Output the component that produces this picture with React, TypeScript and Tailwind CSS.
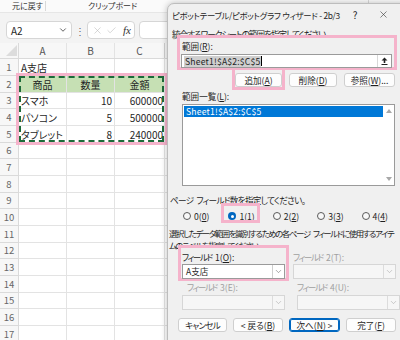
import { ChevronDown, X, Check } from "lucide-react";

const font = "font-['Noto_Sans_CJK_JP',sans-serif] [font-feature-settings:'palt']";

type Row = { a?: string; b?: string; c?: string; head?: boolean };

const data: Row[] = [
  { a: "A支店" },
  { a: "商品", b: "数量", c: "金額", head: true },
  { a: "スマホ", b: "10", c: "600000" },
  { a: "パソコン", b: "5", c: "500000" },
  { a: "タブレット", b: "8", c: "240000" },
];

const rows: Row[] = Array.from({ length: 17 }, (_, i) => data[i] || {});

function Btn({ label, w, primary }: { label: React.ReactNode; w: string; primary?: boolean }) {
  return (
    <div
      className={`${w} h-[14px] flex items-center justify-center rounded-[3px] bg-[#fdfdfd] ${
        primary ? "border border-[#0067c0] shadow-[inset_0_0_0_1px_#0067c0]" : "border border-[#cfcfcf]"
      }`}
    >
      {label}
    </div>
  );
}

function Radio({ label, on }: { label: React.ReactNode; on?: boolean }) {
  return (
    <div className="flex items-center gap-[3px]">
      {on ? (
        <span className="w-[8px] h-[8px] rounded-full bg-[#0067c0] flex items-center justify-center">
          <span className="w-[3px] h-[3px] rounded-full bg-white" />
        </span>
      ) : (
        <span className="w-[8px] h-[8px] rounded-full border border-[#5a5a5a] bg-[#f8f8f8]" />
      )}
      <span>{label}</span>
    </div>
  );
}

function Combo({ w, value, disabled }: { w: string; value?: string; disabled?: boolean }) {
  return (
    <div
      className={`${w} h-[15px] flex items-stretch border ${
        disabled ? "border-[#d6d6d6] bg-[#f6f6f6]" : "border-[#9a9a9a] bg-white"
      }`}
    >
      <span className="flex-1 pl-[3px] leading-[13px]">{value}</span>
      <span className={`w-[12px] flex items-center justify-center border-l ${disabled ? "border-[#dcdcdc]" : "border-[#cfcfcf]"}`}>
        <ChevronDown size={9} strokeWidth={1.5} color={disabled ? "#a6a6a6" : "#6a6a6a"} />
      </span>
    </div>
  );
}

function FieldLabel({ n, k }: { n: string; k: string }) {
  return (
    <>
      <span className="tracking-[-1.4px]">フィールド</span>
      <span className="ml-[3px]">
        {n}(<u>{k}</u>):
      </span>
    </>
  );
}

export default function App() {
  return (
    <div className={`w-[400px] h-[340px] relative overflow-hidden bg-white text-[#1f1f1f] ${font}`}>
      {/* ribbon bottom strip */}
      <div className="h-[12px] flex items-center text-[8px] text-[#333] bg-[#fafafa]">
        <span className="w-[46px] pl-[12px] border-r border-[#d8d8d8] leading-[10px]">元に戻す</span>
        <span className="ml-[42px]">クリップボード</span>
        <span className="ml-auto mr-[31px] h-[4px] self-start border-l border-[#d8d8d8]" />
      </div>

      {/* formula bar */}
      <div className="h-[31px] bg-[#f3f3f3] flex items-start pt-[8px] pl-[6px] border-t border-[#e6e6e6]">
        <div className="w-[66px] h-[18px] bg-white border border-[#d6d6d6] rounded-[4px] flex items-center pl-[4px] pr-[3px] text-[10px]">
          <span className="flex-1">A2</span>
          <ChevronDown size={10} strokeWidth={2} color="#444" />
        </div>
        <span className="w-[15px] h-[18px] flex items-center justify-center text-[10px] text-[#666]">⋮</span>
        <div className="w-[48px] h-[18px] bg-white border border-[#d6d6d6] rounded-[4px] flex items-center pl-[4px] gap-[3px]">
          <X size={11} strokeWidth={1.2} color="#b8b8b8" />
          <Check size={11} strokeWidth={1.2} color="#b8b8b8" />
          <span className="ml-[3px] font-['Liberation_Serif',serif] italic text-[11px] text-[#333]">fx</span>
        </div>
        <div className="ml-[4px] flex-1 h-[18px] bg-white border border-[#d6d6d6] rounded-[4px]" />
      </div>

      {/* column headers */}
      <div className="h-[16px] flex bg-[#f7f7f7] border-b border-[#dadada] text-[10px] text-[#555]">
        <div className="w-[19px] relative border-r border-[#dadada]">
          <svg className="absolute left-[6px] bottom-[2px]" width="11" height="11" viewBox="0 0 11 11">
            <path d="M11 0 L11 11 L0 11 Z" fill="#dcdcdc" />
          </svg>
        </div>
        <div className="w-[48px] flex items-center justify-center border-r border-[#e3e3e3]">A</div>
        <div className="w-[48px] flex items-center justify-center border-r border-[#e3e3e3]">B</div>
        <div className="w-[50px] flex items-center justify-center border-r border-[#cfcfcf]">C</div>
        <div className="flex-1" />
      </div>

      {/* grid */}
      <div className="text-[10px]">
        {rows.map((r, i) => (
          <div key={i} className={`flex ${i % 3 === 2 ? "h-[16px]" : "h-[17px]"}`}>
            <div className="w-[19px] flex items-center justify-center bg-[#f7f7f7] border-r border-b border-[#dadada] text-[#666] text-[9.5px]">
              {i + 1}
            </div>
            <div
              className={`w-[48px] flex items-center border-r border-b border-[#e3e3e3] whitespace-nowrap ${
                r.head ? "justify-center bg-[#c6e0b4]" : "pl-[2px]"
              }`}
            >
              {r.a}
            </div>
            <div
              className={`w-[48px] flex items-center border-r border-b border-[#e3e3e3] ${
                r.head ? "justify-center bg-[#c6e0b4]" : "justify-end pr-[2px]"
              }`}
            >
              {r.b}
            </div>
            <div
              className={`w-[50px] flex items-center border-r border-b border-[#e3e3e3] whitespace-nowrap ${
                r.head ? "justify-center bg-[#c6e0b4]" : "justify-end pr-[1px]"
              }`}
            >
              {r.c}
            </div>
            <div className="flex-1 border-b border-[#e3e3e3]" />
          </div>
        ))}
      </div>

      {/* copy range + callout */}
      <div className="absolute left-[19px] top-[76px] w-[145px] h-[66px] border-2 border-dashed border-[#1d6b3a]" />
      <div className="absolute left-[16px] top-[73px] w-[152px] h-[72px] border-[3px] border-[#f5b3cb]" />

      {/* dialog */}
      <div className="absolute left-[167px] top-[3px] w-[240px] h-[345px] bg-[#f0f0f0] border border-[#bdbdbd] rounded-tl-[7px] shadow-[0_0_6px_rgba(0,0,0,0.25)] text-[8.6px] leading-[12px]">
        <div className="h-[21px] flex items-center pl-[4px]">
          <span className="flex-1 whitespace-nowrap text-[8.4px] tracking-[-0.3px]">ピボットテーブル/ピボットグラフ ウィザード - 2b/3</span>
          <span className="w-[28px] text-center text-[10px]">?</span>
          <span className="w-[28px] flex justify-center">
            <X size={11} strokeWidth={1.3} color="#333" />
          </span>
          <span className="w-[9px]" />
        </div>

        <div className="mt-[3px] pl-[4px] h-[12px] whitespace-nowrap tracking-[-1px]">統合するワークシートの範囲を指定してください。</div>

        {/* range box */}
        <div className="relative -mt-[5px] ml-[9px] w-[220px] h-[35px] border-[3px] border-[#f5b3cb] bg-[#f0f0f0] pt-[2px]">
          <div className="h-[12px] pl-[2px]">
            範囲(<u>R</u>):
          </div>
          <div className="mt-[2px] ml-[1px] w-[211px] h-[14px] bg-white border border-[#9a9a9a] flex items-center">
            <span className="ml-[2px] bg-[#cfcfcf] px-[1px] leading-[11px] tracking-[0.2px]">Sheet1!$A$2:$C$5</span>
            <span className="w-px h-[10px] bg-black" />
            <span className="ml-auto w-[14px] h-[12px] flex items-center justify-center border-l border-[#d8d8d8]">
              <svg width="7" height="8" viewBox="0 0 7 8">
                <path d="M3.5 0.5 L6.5 3.5 L4.3 3.5 L4.3 6 L2.7 6 L2.7 3.5 L0.5 3.5 Z" fill="#222" />
                <rect x="0.5" y="7" width="6" height="1" fill="#222" />
              </svg>
            </span>
          </div>
        </div>

        {/* add / delete / browse */}
        <div className="flex items-start">
          <div className="ml-[64px] border-[3px] border-t-0 border-[#f5b3cb] pt-[3px]">
            <Btn w="w-[47px]" label={<>追加(<u>A</u>)</>} />
          </div>
          <div className="ml-[4px] mt-[3px]">
            <Btn w="w-[48px]" label={<>削除(<u>D</u>)</>} />
          </div>
          <div className="ml-[7px] mt-[3px]">
            <Btn w="w-[51px]" label={<>参照(<u>W</u>)...</>} />
          </div>
        </div>

        <div className="h-[12px] pl-[14px]">
          範囲一覧(<u>L</u>):
        </div>
        <div className="mt-[2px] ml-[14px] w-[213px] h-[82px] bg-white border border-[#9a9a9a] flex">
          <div className="flex-1 pt-[1px] pl-px">
            <div className="h-[11px] bg-[#0078d7] text-white leading-[11px] pl-[2px] tracking-[0.2px]">Sheet1!$A$2:$C$5</div>
          </div>
          <div className="w-[11px] flex flex-col items-center justify-between py-[4px]">
            <svg width="6" height="4" viewBox="0 0 6 4">
              <path d="M3 0 L6 4 L0 4 Z" fill="#a8a8a8" />
            </svg>
            <svg width="6" height="4" viewBox="0 0 6 4">
              <path d="M0 0 L6 0 L3 4 Z" fill="#a8a8a8" />
            </svg>
          </div>
        </div>

        <div className="mt-[8px] pl-[2px] h-[12px] whitespace-nowrap tracking-[-0.7px]">
          ページ<span className="ml-[3px]">フィールド数を指定してください。</span>
        </div>

        {/* radios */}
        <div className="h-[20px] flex items-center pl-[15px]">
          <div className="w-[47px]">
            <Radio label={<>0(<u>0</u>)</>} />
          </div>
          <div className="w-[46px] relative">
            <span className="absolute -left-[7px] -top-[7px] w-[39px] h-[20px] border-[3px] border-[#f5b3cb]" />
            <Radio on label={<>1(<u>1</u>)</>} />
          </div>
          <div className="w-[46px]">
            <Radio label={<>2(<u>2</u>)</>} />
          </div>
          <div className="w-[46px]">
            <Radio label={<>3(<u>3</u>)</>} />
          </div>
          <div className="w-[46px]">
            <Radio label={<>4(<u>4</u>)</>} />
          </div>
        </div>

        <div className="mt-[1px] pl-[1px] whitespace-nowrap text-[8.4px] tracking-[-1.35px]">
          選択したデータ範囲を識別するための各ページ<span className="ml-[3px]">フィールドに使用するアイテ</span>
        </div>
        <div className="pl-[1px] h-[12px] whitespace-nowrap text-[8.4px] tracking-[-1.35px]">ムのラベルを指定してください。</div>

        {/* fields */}
        <div className="-mt-[6px] flex items-start">
          <div className="ml-[10px] w-[111px] h-[36px] border-[3px] border-[#f5b3cb] bg-[#f0f0f0] pt-[3px]">
            <div className="h-[12px] pl-[1px]">
              <FieldLabel n="1" k="O" />
            </div>
            <div className="mt-[1px] ml-px">
              <Combo w="w-[103px]" value="A支店" />
            </div>
          </div>
          <div className="ml-[4px] pt-[6px] text-[#a0a0a0]">
            <div className="h-[12px]">
              <span className="tracking-[-1.4px]">フィールド</span>
              <span className="ml-[3px]">2(T):</span>
            </div>
            <div className="mt-[1px]">
              <Combo w="w-[103px]" disabled />
            </div>
          </div>
        </div>

        <div className="flex items-start">
          <div className="ml-[14px] w-[104px] text-[#a0a0a0]">
            <div className="h-[12px] pl-[5px]">
              <span className="tracking-[-1.4px]">フィールド</span>
              <span className="ml-[3px]">3(E):</span>
            </div>
            <div className="mt-[2px]">
              <Combo w="w-[103px]" disabled />
            </div>
          </div>
          <div className="ml-[11px] text-[#a0a0a0]">
            <div className="h-[12px]">
              <span className="tracking-[-1.4px]">フィールド</span>
              <span className="ml-[3px]">4(U):</span>
            </div>
            <div className="mt-[2px]">
              <Combo w="w-[103px]" disabled />
            </div>
          </div>
        </div>

        {/* footer buttons */}
        <div className="mt-[8px] ml-[10px] flex gap-[6px]">
          <Btn w="w-[49px]" label={<span className="tracking-[-0.8px]">キャンセル</span>} />
          <Btn w="w-[50px]" label={<>&lt; 戻る(<u>B</u>)</>} />
          <Btn w="w-[51px]" primary label={<>次へ(<u>N</u>) &gt;</>} />
          <Btn w="w-[50px]" label={<>完了(<u>F</u>)</>} />
        </div>
      </div>
    </div>
  );
}
